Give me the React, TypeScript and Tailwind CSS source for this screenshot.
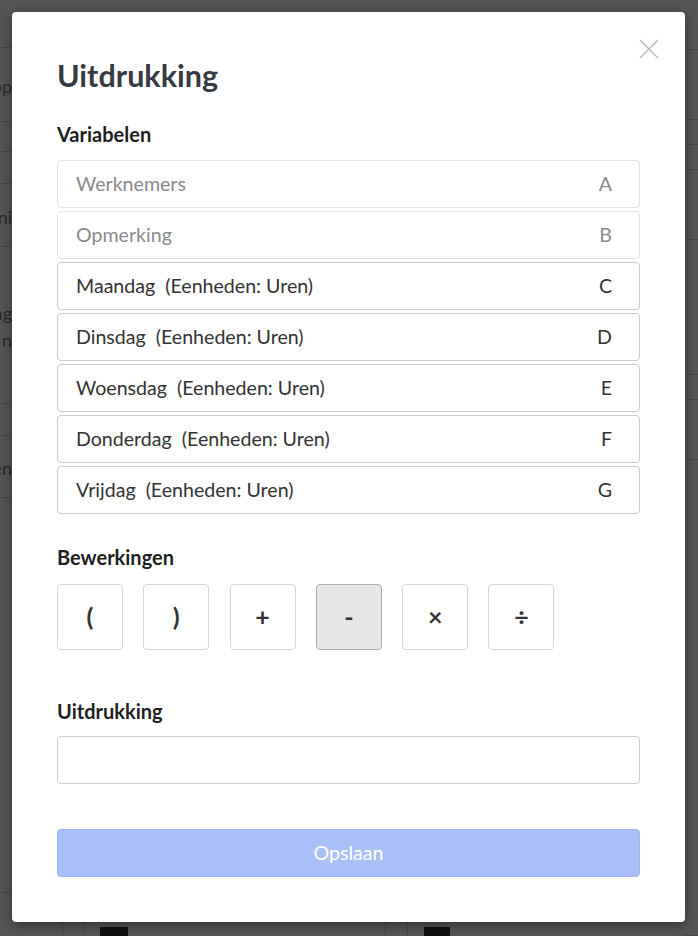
import React from "react";

const vars = [
  { label: "Werknemers", key: "A", muted: true },
  { label: "Opmerking", key: "B", muted: true },
  { label: "Maandag\u00a0 (Eenheden: Uren)", key: "C", muted: false },
  { label: "Dinsdag\u00a0 (Eenheden: Uren)", key: "D", muted: false },
  { label: "Woensdag\u00a0 (Eenheden: Uren)", key: "E", muted: false },
  { label: "Donderdag\u00a0 (Eenheden: Uren)", key: "F", muted: false },
  { label: "Vrijdag\u00a0 (Eenheden: Uren)", key: "G", muted: false },
];

const ops = ["(", ")", "+", "-", "\u00d7", "\u00f7"];

const leftRows: { h: number; t: string[] }[] = [
  { h: 48, t: [] },
  { h: 74, t: ["op"] },
  { h: 30, t: [] },
  { h: 32, t: [] },
  { h: 63, t: ["ni"] },
  { h: 157, t: ["ng", "n"] },
  { h: 32, t: [] },
  { h: 62, t: ["en"] },
  { h: 395, t: [] },
];
const rightRows = [50, 70, 25, 25, 70, 135, 25, 60, 476];

export default function App() {
  return (
    <div
      className="relative h-[936px] w-[698px] overflow-hidden bg-[#555555]"
      style={{ fontFamily: "Lato, 'Open Sans', sans-serif" }}
    >
      {/* dimmed background page */}
      <div className="flex h-full w-full justify-between text-[18px] leading-[27px] text-[#2a2a2a]">
        <div className="flex w-[30px] flex-col">
          {leftRows.map((r, i) => (
            <div
              key={i}
              className="flex flex-col items-end justify-center border-b border-[#474747] pr-[18px] pt-[4px]"
              style={{ height: r.h }}
            >
              {r.t.map((s) => (
                <span key={s} className="whitespace-nowrap">
                  {s}
                </span>
              ))}
            </div>
          ))}
        </div>
        <div className="flex w-[14px] flex-col">
          {rightRows.map((h, i) => (
            <div key={i} className="border-b border-[#474747]" style={{ height: h }} />
          ))}
        </div>
      </div>
      <div className="absolute bottom-0 left-0 flex h-[15px] w-full">
        <div className="ml-[62px] h-full w-[23px] border-x border-[#474747]" />
        <div className="ml-[15px] mt-[6px] h-[9px] w-[28px] bg-[#111]" />
        <div className="ml-[257px] h-full w-[23px] border-x border-[#474747]" />
        <div className="ml-[16px] mt-[6px] h-[9px] w-[26px] bg-[#111]" />
      </div>

      {/* modal */}
      <div className="absolute left-[12px] top-[12px] flex w-[673px] flex-col rounded-[4px] bg-white px-[45px] pb-[45px] pt-[44px] shadow-[0_3px_12px_rgba(0,0,0,0.45)]">
        <button className="absolute right-[26px] top-[27px] h-[20px] w-[20px]" aria-label="close">
          <svg viewBox="0 0 20 20" className="h-[20px] w-[20px]">
            <path d="M1 1 L19 19 M19 1 L1 19" stroke="#bdbdbd" strokeWidth="1.6" fill="none" />
          </svg>
        </button>

        <h1 className="text-[30.5px] font-bold leading-[38px] text-[#363a43]">Uitdrukking</h1>

        <h2 className="mt-[29px] text-[20px] font-bold leading-[22px] text-[#1f1f1f]">Variabelen</h2>

        <div className="mt-[15px] flex flex-col gap-[3px]">
          {vars.map((v) => (
            <div
              key={v.key}
              className={`flex h-[48px] items-center justify-between rounded-[4px] border pl-[18px] pr-[27px] text-[19.6px] ${
                v.muted ? "border-[#e3e3e3] text-[#8a8a8a]" : "border-[#cccccc] text-[#333333]"
              }`}
            >
              <span>{v.label}</span>
              <span>{v.key}</span>
            </div>
          ))}
        </div>

        <h2 className="mt-[32px] text-[20px] font-bold leading-[22px] text-[#1f1f1f]">Bewerkingen</h2>

        <div className="mt-[16px] flex gap-[20.3px]">
          {ops.map((o) => (
            <div
              key={o}
              className={`flex h-[66px] w-[66px] items-center justify-center rounded-[4px] border text-[25px] font-bold text-[#333333] ${
                o === "-" ? "border-[#adadad] bg-[#e6e6e6]" : "border-[#d6d6d6] bg-white"
              }`}
            >
              {o}
            </div>
          ))}
        </div>

        <h2 className="mt-[50px] text-[20px] font-bold leading-[22px] text-[#1f1f1f]">Uitdrukking</h2>

        <div className="mt-[14px] h-[48px] rounded-[4px] border border-[#cccccc]" />

        <button className="mt-[45px] flex h-[48px] items-center justify-center rounded-[4px] border border-[#a0b6f2] bg-[#a9bff8] text-[19.6px] text-white">
          Opslaan
        </button>
      </div>
    </div>
  );
}
